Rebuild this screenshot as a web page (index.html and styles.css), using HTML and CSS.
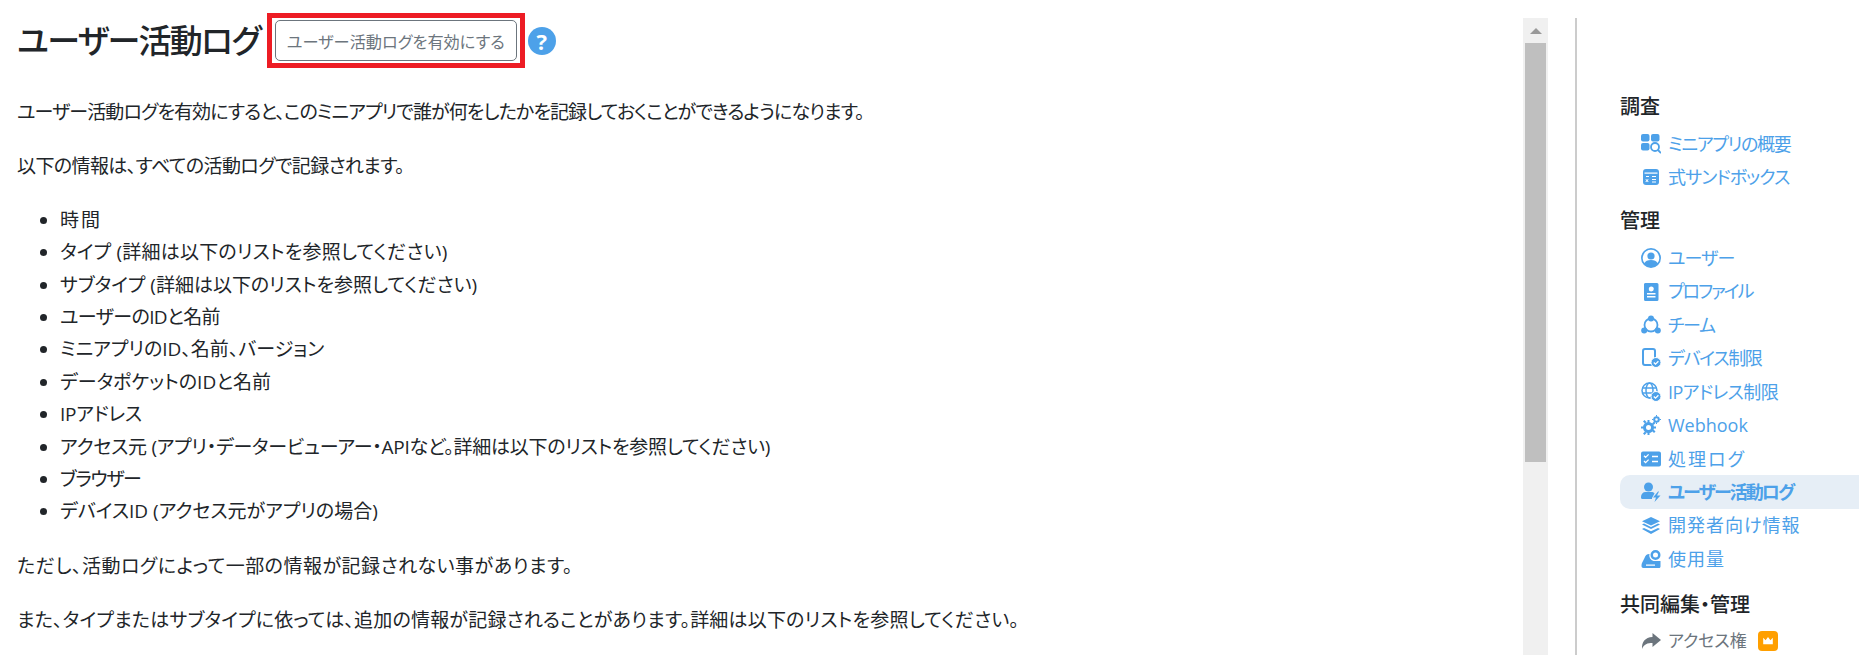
FILE: index.html
```html
<!DOCTYPE html>
<html lang="ja">
<head>
    <meta charset="UTF-8">
    <title>ユーザー活動ログ</title>
    <link rel="stylesheet" href="styles.css">
</head>
<body>
    <div class="main">
        <div class="title-row">
            <h1>ユーザー活動ログ</h1>
            <div class="highlight"><button class="btn-enable">ユーザー活動ログを有効にする</button></div>
            <span class="help">?</span>
        </div>
        <p class="t3">ユーザー活動ログを有効にすると、このミニアプリで誰が何をしたかを記録しておくことができるようになります。</p>
        <p class="t2">以下の情報は、すべての活動ログで記録されます。</p>
        <ul>
            <li class="l4">時間</li>
            <li class="l1">タイプ (詳細は以下のリストを参照してください)</li>
            <li>サブタイプ (詳細は以下のリストを参照してください)</li>
            <li class="t2">ユーザーのIDと名前</li>
            <li>ミニアプリのID、名前、バージョン</li>
            <li>データポケットのIDと名前</li>
            <li class="t1">IPアドレス</li>
            <li class="t1">アクセス元 (アプリ・データービューアー・APIなど。詳細は以下のリストを参照してください)</li>
            <li class="t4">ブラウザー</li>
            <li>デバイスID (アクセス元がアプリの場合)</li>
        </ul>
        <p class="l2">ただし、活動ログによって一部の情報が記録されない事があります。</p>
        <p class="l1">また、タイプまたはサブタイプに依っては、追加の情報が記録されることがあります。詳細は以下のリストを参照してください。</p>
    </div>
    <div class="scrollbar">
        <div class="scroll-up"><span class="arrow"></span></div>
        <div class="scroll-thumb"></div>
    </div>
    <div class="sidebar">
        <h4>調査</h4>
        <a class="item t4">
            <svg viewBox="0 0 20 20"><rect x="0" y="0" width="8.5" height="7.5" rx="2"/><rect x="10" y="0" width="8.5" height="7.5" rx="2"/><rect x="0" y="9" width="8.5" height="7.5" rx="2"/><circle cx="14" cy="13" r="4" fill="#fff" stroke="#4da1e9" stroke-width="1.8"/><path d="M17 16l3 3" stroke="#4da1e9" stroke-width="1.8" fill="none"/></svg>
            ミニアプリの概要
        </a>
        <a class="item t3">
            <svg viewBox="0 0 20 20"><rect x="2" y="2" width="16" height="16" rx="3"/><g fill="#fff"><rect x="3.5" y="5.5" width="13" height="1.2"/><path d="M5 9h3v1H5zM11 9h4v1h-4zM11 12h4v1h-4zM11 14.5h4v1h-4zM5 12l1 1 1-1 .6.6-1 1 1 1-.6.6-1-1-1 1-.6-.6 1-1-1-1z"/></g></svg>
            式サンドボックス
        </a>
        <h4>管理</h4>
        <a class="item t3">
            <svg viewBox="0 0 20 20"><path fill-rule="evenodd" d="M10 0a10 10 0 1 0 0 20a10 10 0 0 0 0-20zm0 1.8a8.2 8.2 0 0 1 6.5 13.2c-1-2-3-3-6.500-3s-5.500 1-6.500 3A8.200 8.200 0 0 1 10 1.800z"/><circle cx="10" cy="8" r="3.600"/></svg>
            ユーザー
        </a>
        <a class="item t5">
            <svg viewBox="0 0 20 20"><path fill-rule="evenodd" d="M5 1h11a1.500 1.500 0 0 1 1.500 1.500v15A1.500 1.500 0 0 1 16 19H4.500A1.500 1.500 0 0 1 3 17.500v-15A1.500 1.500 0 0 1 5 1zm5.300 3.500a2.500 2.500 0 1 0 0 5a2.500 2.500 0 0 0 0-5zM6 11v1.500h8.500V11zm0 3v1.500h8.500V14z"/></svg>
            プロファイル
        </a>
        <a class="item t4">
            <svg viewBox="0 0 20 20"><circle cx="10" cy="10" r="6.500" fill="none" stroke="#4da1e9" stroke-width="1.800"/><circle cx="10" cy="3.500" r="3"/><circle cx="3.200" cy="15.500" r="3"/><circle cx="16.800" cy="15.500" r="3"/></svg>
            チーム
        </a>
        <a class="item t4">
            <svg viewBox="0 0 20 20"><rect x="2" y="1" width="12" height="16" rx="2" fill="none" stroke="#4da1e9" stroke-width="2"/><circle cx="15" cy="14.500" r="5" stroke="#fff" stroke-width="1"/><path d="M12.800 14.500l1.700 1.700 2.900-2.900" fill="none" stroke="#fff" stroke-width="1.300"/></svg>
            デバイス制限
        </a>
        <a class="item t2">
            <svg viewBox="0 0 20 20"><g fill="none" stroke="#4da1e9" stroke-width="1.500"><circle cx="8.500" cy="8.500" r="7.500"/><ellipse cx="8.500" cy="8.500" rx="3.500" ry="7.500"/><path d="M1 6h15M1 11h15"/></g><circle cx="15" cy="14.500" r="5" stroke="#fff" stroke-width="1"/><path d="M12.800 14.500l1.700 1.700 2.900-2.900" fill="none" stroke="#fff" stroke-width="1.300"/></svg>
            IPアドレス制限
        </a>
        <a class="item">
            <svg viewBox="0 0 20 20"><circle cx="7.500" cy="12.500" r="4" fill="none" stroke="#4da1e9" stroke-width="3"/><path d="M6.500 5h2v3h-2zM6.500 17h2v3h-2zM0 11.500h3v2H0zM12 11.500h3v2h-3zM2 6.500l1.500-1.500 2 2L4 8.500zM11 16l1.500-1.500 2 2-1.500 1.500zM2 18.500L3.500 20l2-2L4 16.500zM11 8.500L12.500 10l2-2L13 6.500z"/><circle cx="15.500" cy="4.500" r="2.300" fill="none" stroke="#4da1e9" stroke-width="2"/><path d="M15 0h1v1.500h-1zM15 7.500h1V9h-1zM11 4h1.500v1H11zM18.500 4H20v1h-1.500z"/></svg>
            Webhook
        </a>
        <a class="item l4">
            <svg viewBox="0 0 20 20"><path fill-rule="evenodd" d="M2 2.500h16a2 2 0 0 1 2 2v11a2 2 0 0 1-2 2H2a2 2 0 0 1-2-2v-11a2 2 0 0 1 2-2z"/><g fill="none" stroke="#fff" stroke-width="1.300"><path d="M3 6.800l1.600 1.600 3-3M3 12l1.600 1.600 3-3M11 7.500h6M11 12.500h6"/></g></svg>
            処理ログ
        </a>
        <a class="item active t5">
            <svg viewBox="0 0 20 20"><circle cx="7.500" cy="5" r="4.500"/><path d="M0 15c0-3 2-5 4.500-5h6c1.500 0 2.500.5 3 1.500L11 16v1H1.500A1.500 1.500 0 0 1 0 15.500z"/><path d="M17 9.500l-5 6h3l-1.500 4.500 6-6.500h-3.500l2-4z"/></svg>
            ユーザー活動ログ
        </a>
        <a class="item l3">
            <svg viewBox="0 0 20 20"><path d="M10 1l9 4.300-9 4.300-9-4.300z"/><path d="M1 8.600l2-1 7 3.300 7-3.300 2 1-9 4.300z"/><path d="M1 13l2-1 7 3.300 7-3.300 2 1-9 5z"/></svg>
            開発者向け情報
        </a>
        <a class="item l3">
            <svg viewBox="0 0 20 20"><path fill-rule="evenodd" d="M8.500 5c-3 0-4 1.500-5 4L1.500 13c-.800 1.500-1 2.500-1 4 0 1 .700 2 2 2h15.500c1 0 1.500-.700 1.500-1.500V12H12.500A5.500 5.500 0 0 1 8.500 5zM5 15.500h9v1.300H5z"/><path fill-rule="evenodd" d="M14.500 1a5 5 0 1 0 0 10a5 5 0 0 0 0-10zm0 2.500a2.500 2.500 0 1 1 0 5a2.500 2.500 0 0 1 0-5z"/></svg>
            使用量
        </a>
        <h4 class="last-section">共同編集・管理</h4>
        <a class="item disabled">
            <svg viewBox="0 0 20 20"><path d="M11.500 2l8.500 7-8.500 7v-4c-5 0-8.500 1-10.500 6C.5 11 4 6.500 11.500 6z"/></svg>
            アクセス権
            <span class="crown"><svg viewBox="0 0 20 20"><path d="M4 6l3 3 3-4 3 4 3-3v8H4z" fill="#fff"/></svg></span>
        </a>
    </div>
</body>
</html>
```

FILE: styles.css
```css
html, body {
    height: 100%;
    margin: 0;
    padding: 0;
    overflow: hidden;
}
body {
    display: flex;
    background-color: #fff;
    color: #212529;
    font-family: "Open Sans", "Noto Sans CJK JP", sans-serif;
    font-size: 18px;
    line-height: 32.4px;
    font-feature-settings: "palt";
}
.main {
    flex: 1;
    min-width: 0;
    padding: 20px 17px 0;
    overflow: hidden;
    font-size: 19px;
}
.title-row {
    display: flex;
    align-items: center;
    height: 41px;
    margin-bottom: 35px;
}
h1 {
    margin: 0;
    font-size: 33px;
    font-weight: 500;
    line-height: 41px;
    letter-spacing: -1.7px;
    white-space: nowrap;
}
.highlight {
    display: flex;
    margin-left: 7px;
    padding: 2px 3px;
    border: 5px solid #ed1c24;
}
.btn-enable {
    width: 242px;
    height: 41px;
    padding: 0;
    border: 1px solid #6c757d;
    border-radius: 5px;
    background-color: #fff;
    color: #6c757d;
    font-family: inherit;
    font-size: 16.2px;
    font-feature-settings: inherit;
}
.help {
    width: 28px;
    height: 28px;
    margin-left: 3px;
    border-radius: 50%;
    background-color: #4da1e9;
    color: #fff;
    font-size: 22px;
    font-weight: 700;
    line-height: 28px;
    text-align: center;
}
p {
    margin: 0 0 22px;
    white-space: nowrap;
}
ul {
    margin: -1px 0 22px;
    padding-left: 43px;
}
/* the original font sets kana narrow and kanji wide, so each line is fitted */
.t1 { letter-spacing: -.25px; }
.t2 { letter-spacing: -.6px; }
.t3 { letter-spacing: -.9px; }
.t4 { letter-spacing: -1.3px; }
.t5 { letter-spacing: -2px; }
.l1 { letter-spacing: .2px; }
.l2 { letter-spacing: .5px; }
.l3 { letter-spacing: 1px; }
.l4 { letter-spacing: 2px; }
.scrollbar {
    flex: none;
    width: 25px;
    margin-top: 18px;
    background-color: #f0f0f0;
}
.scroll-up {
    display: flex;
    align-items: center;
    justify-content: center;
    height: 25px;
}
.arrow {
    width: 0;
    height: 0;
    border-left: 6px solid transparent;
    border-right: 6px solid transparent;
    border-bottom: 6px solid #999;
}
.scroll-thumb {
    height: 419px;
    margin: 0 2px;
    background-color: #bfbfbf;
}
.sidebar {
    flex: none;
    box-sizing: border-box;
    width: 284px;
    margin: 18px 0 0 27px;
    padding: 71px 0 0 43px;
    border-left: 2px solid #ccc;
}
h4 {
    margin: 9.5px 0 2px;
    font-size: 20px;
    font-weight: 500;
    line-height: 36px;
}
h4:first-child {
    margin-top: 0;
}
.last-section {
    margin-top: 11px;
}
.item {
    display: flex;
    align-items: center;
    gap: 7px;
    height: 33.45px;
    padding-left: 21px;
    border-radius: 10px 0 0 10px;
    color: #4da1e9;
    white-space: nowrap;
}
.item svg {
    flex: none;
    width: 20px;
    height: 20px;
    fill: #4da1e9;
}
.active {
    background-color: #e6eef6;
    font-weight: 700;
}
.disabled {
    color: #6c757d;
    font-size: 17px;
}
.disabled > svg {
    fill: #6c757d;
}
.crown {
    display: flex;
    align-items: center;
    justify-content: center;
    width: 20px;
    height: 20px;
    margin-left: 4px;
    border-radius: 4px;
    background-color: #ff9f00;
}
.crown svg {
    width: 16px;
    height: 16px;
    fill: #fff;
}
```
